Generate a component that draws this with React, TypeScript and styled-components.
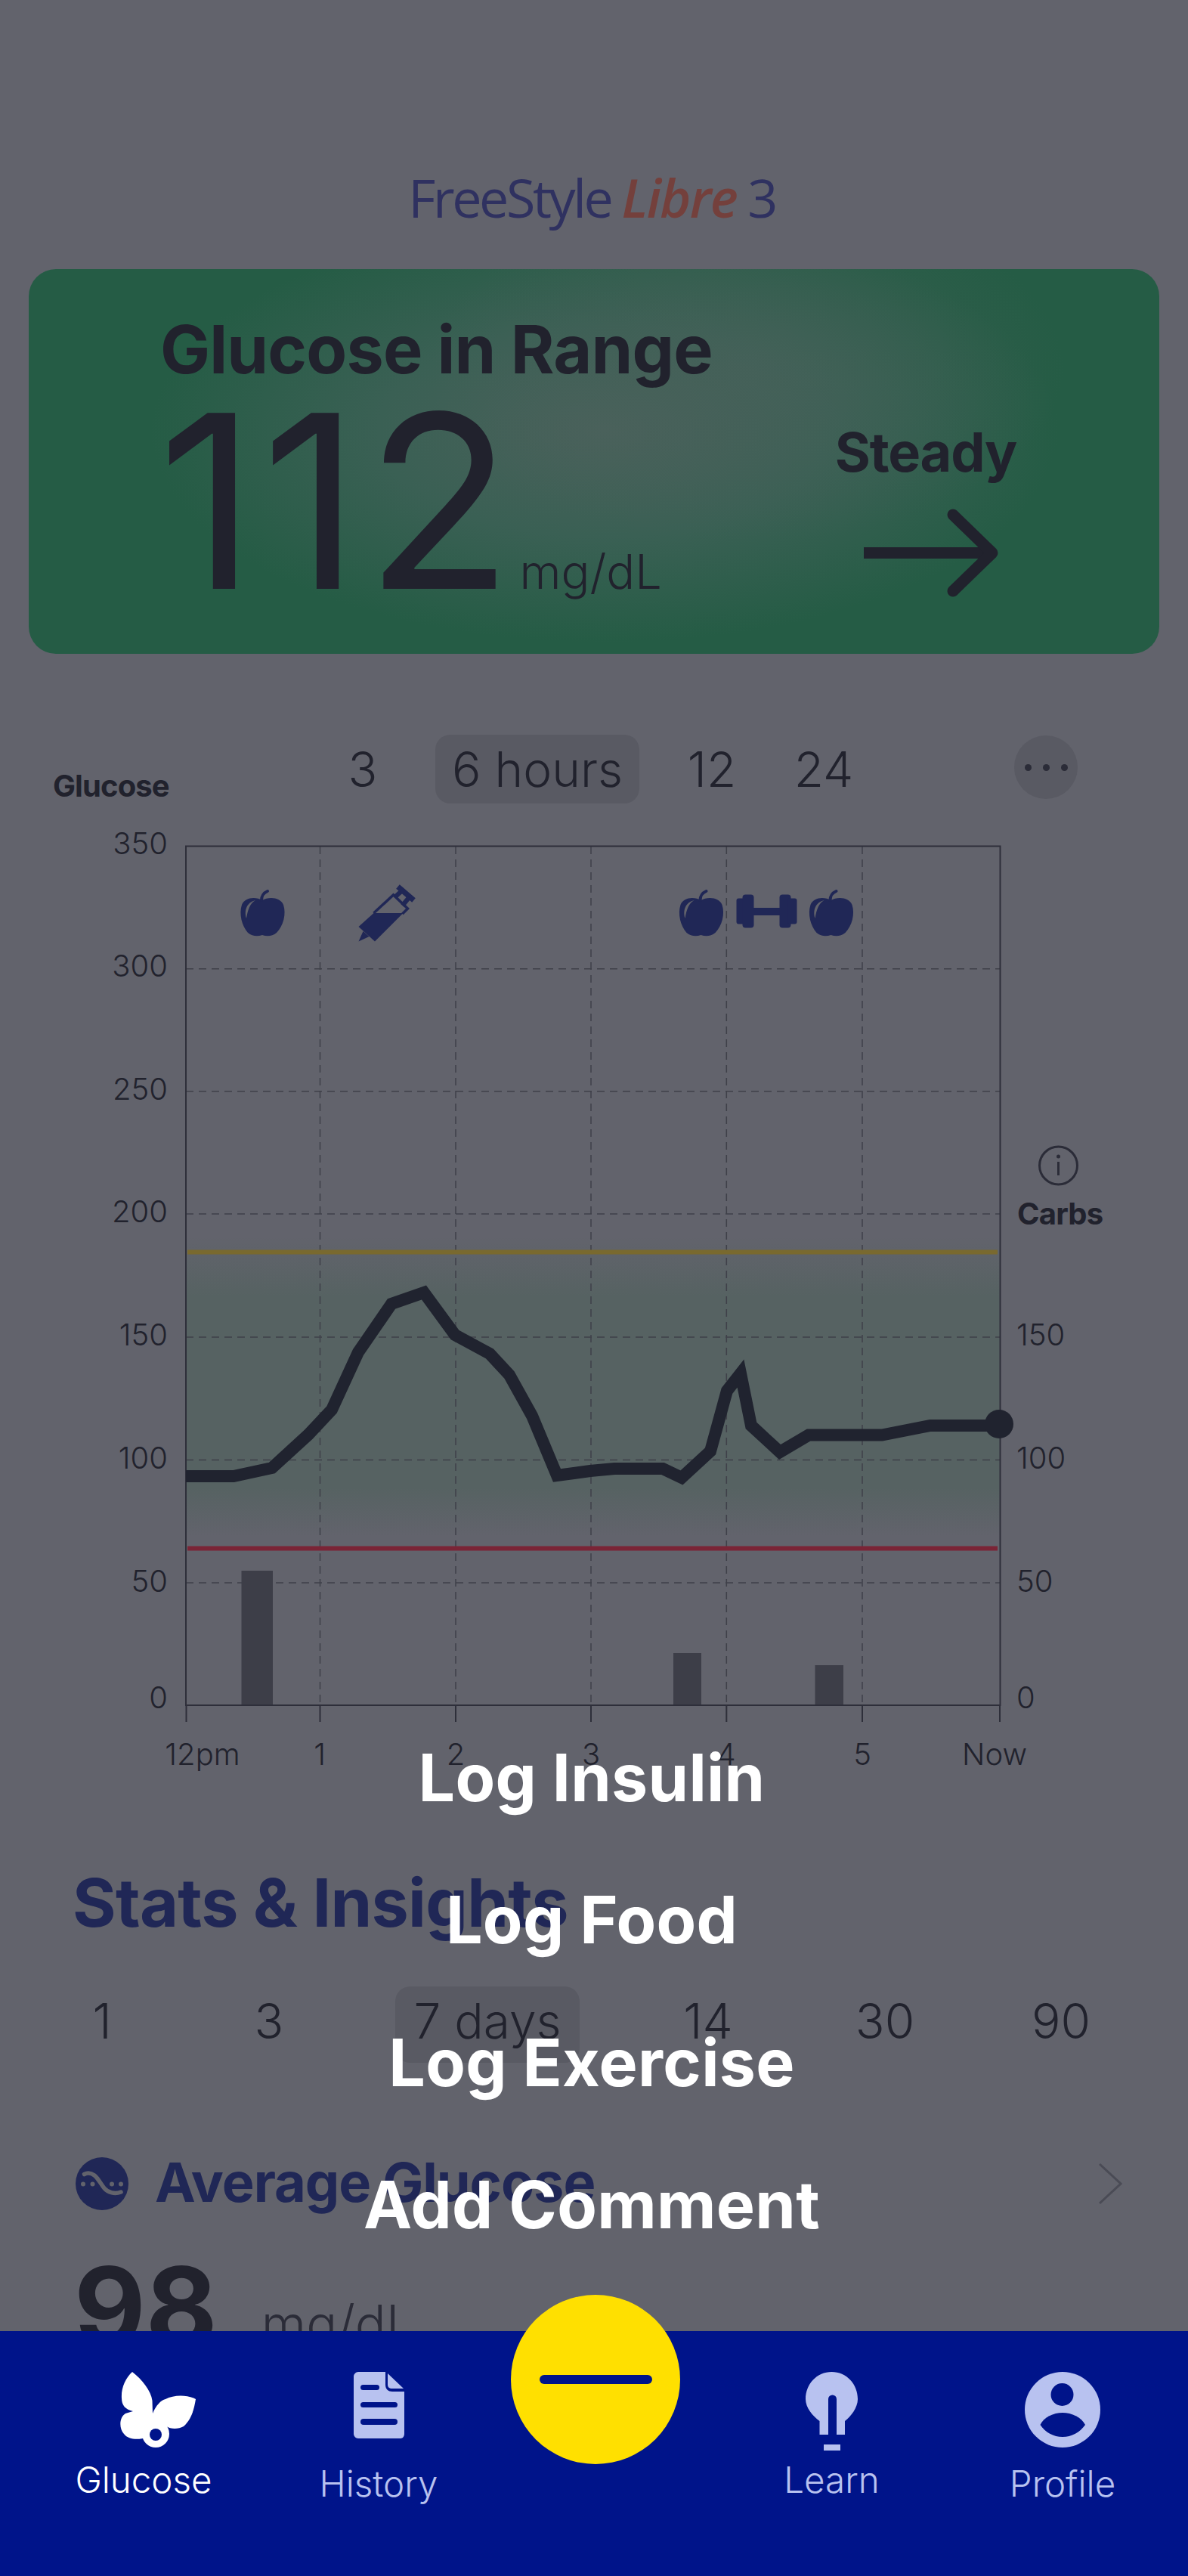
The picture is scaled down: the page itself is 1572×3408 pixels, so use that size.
import React from "react";
import styled, { createGlobalStyle } from "styled-components";

const NAVY = "#202756";
const INK = "#21222d";
const SOFT_INK = "#2b2c38";
const DIM = "#62636c";
const PILL = "#595a63";
const NAV_BLUE = "#00148a";
const NAV_TINT = "#b8c2f0";

const GlobalStyle = createGlobalStyle`
  html, body {
    margin: 0;
    padding: 0;
    background: ${DIM};
  }

  * {
    box-sizing: border-box;
  }
`;

const Page = styled.div`
  position: relative;
  width: 1572px;
  height: 3408px;
  overflow: hidden;
  background: ${DIM};
  font-family: Inter, "Liberation Sans", sans-serif;
  color: ${INK};
`;

const Logo = styled.div`
  display: flex;
  justify-content: center;
  gap: 14px;
  margin: 227px 0 61px;
  padding-right: 6px;
  height: 68px;
  font-family: "Open Sans", sans-serif;
  font-size: 70px;
  line-height: 68px;
`;

const LogoPart = styled.span<{ $brand?: boolean }>`
  color: ${({ $brand }) => ($brand ? "#74403c" : "#2f3160")};
  font-style: ${({ $brand }) => ($brand ? "italic" : "normal")};
  font-weight: ${({ $brand }) => ($brand ? 600 : 400)};
  letter-spacing: ${({ $brand }) => ($brand ? "-1.6px" : "-3.4px")};
`;

const GlucoseCard = styled.section`
  display: flex;
  justify-content: space-between;
  width: 1496px;
  height: 509px;
  margin-left: 38px;
  padding: 62px 159px 0 174px;
  border-radius: 36px;
  background:
    radial-gradient(ellipse 420px 230px at 950px 130px, rgba(74, 97, 91, 0.6), rgba(74, 97, 91, 0) 100%),
    radial-gradient(ellipse 600px 280px at 762px 214px, #4a615b 0%, #3a6054 50%, #255c45 100%);
`;

const ReadingColumn = styled.div`
  display: flex;
  flex-direction: column;
`;

const CardTitle = styled.h1`
  margin: 0;
  font-size: 88px;
  line-height: 88px;
  font-weight: 700;
  letter-spacing: -0.8px;
`;

const ReadingRow = styled.div`
  display: flex;
  align-items: baseline;
  margin: -3px 0 0 -3px;
`;

const ReadingValue = styled.span`
  font-size: 320px;
  line-height: 320px;
  font-weight: 400;
  letter-spacing: 7px;
`;

const ReadingUnit = styled.span`
  margin-left: 2px;
  font-size: 63px;
  line-height: 64px;
  font-weight: 300;
  color: ${INK};
`;

const TrendColumn = styled.div`
  display: flex;
  flex-direction: column;
  align-items: center;
  width: 300px;
  padding-top: 144px;
`;

const TrendLabel = styled.div`
  font-size: 72px;
  line-height: 72px;
  font-weight: 700;
  letter-spacing: -1.2px;
`;

const TrendArrow = styled.svg`
  margin: 39px 0 0 14px;
`;

const RangeRow = styled.div`
  display: flex;
  margin-top: 107px;
  padding: 0 146px 0 70px;
  height: 91px;
`;

const AxisTitle = styled.div`
  align-self: flex-end;
  width: 360px;
  margin-bottom: 3px;
  font-size: 40px;
  line-height: 40px;
  font-weight: 700;
  letter-spacing: -0.9px;
`;

const TabStrip = styled.div<{ $gap: number }>`
  display: flex;
  gap: ${({ $gap }) => $gap}px;
`;

const Tab = styled.div<{ $width: number; $height: number; $active?: boolean; $lift?: number }>`
  width: ${({ $width }) => $width}px;
  height: ${({ $height }) => $height}px;
  padding-bottom: ${({ $lift }) => $lift ?? 0}px;
  border-radius: 20px;
  background: ${({ $active }) => ($active ? PILL : "transparent")};
  color: ${INK};
  text-align: center;
  font-size: 64px;
  line-height: ${({ $height, $lift }) => $height - ($lift ?? 0)}px;
  font-weight: 300;
  white-space: nowrap;
`;

const MoreButton = styled.div`
  display: flex;
  align-items: center;
  justify-content: center;
  gap: 15px;
  width: 84px;
  height: 84px;
  margin: 1px 0 0 auto;
  border-radius: 50%;
  background: ${PILL};
`;

const MoreDot = styled.span`
  width: 9px;
  height: 9px;
  border-radius: 50%;
  background: ${SOFT_INK};
`;

const ChartFrame = styled.svg`
  display: block;
  margin-top: 27px;
  font-family: Inter, "Liberation Sans", sans-serif;
`;

const StatsTitle = styled.h2`
  margin: 113px 0 0 96px;
  font-size: 88px;
  line-height: 88px;
  font-weight: 700;
  letter-spacing: -0.7px;
  color: ${NAVY};
`;

const DayRow = styled.div`
  margin: 67px 0 0 81px;
`;

const StatRow = styled.div`
  display: flex;
  align-items: center;
  height: 70px;
  margin-top: 125px;
  padding: 0 87px 0 100px;
`;

const StatLabel = styled.div`
  margin: 0 0 4px 35px;
  font-size: 72px;
  line-height: 72px;
  font-weight: 700;
  letter-spacing: -1px;
  color: ${NAVY};
`;

const StatChevron = styled.svg`
  margin-left: auto;
`;

const StatValueRow = styled.div`
  display: flex;
  align-items: flex-start;
  margin: 56px 0 0 98px;
`;

const StatValue = styled.span`
  font-size: 146px;
  line-height: 144px;
  font-weight: 700;
`;

const StatUnit = styled.span`
  margin: 60px 0 0 58px;
  font-size: 68px;
  line-height: 68px;
  font-weight: 300;
  color: ${SOFT_INK};
`;

// the actions that open over the dimmed page
const ActionMenu = styled.div`
  position: absolute;
  top: 2309px;
  left: 0;
  width: 1566px;
  display: flex;
  flex-direction: column;
  gap: 102.3px;
  color: #fff;
  text-align: center;
  font-size: 86px;
  line-height: 86px;
  font-weight: 700;
  letter-spacing: 0.3px;
`;

const BottomNav = styled.nav`
  position: absolute;
  left: 0;
  right: 0;
  bottom: 0;
  display: grid;
  grid-template-columns: 312px 310px 288px 313px 298px;
  height: 324px;
  padding: 54px 0 0 34px;
  background: ${NAV_BLUE};
`;

const NavItem = styled.div<{ $active?: boolean }>`
  display: flex;
  flex-direction: column;
  align-items: center;
  color: ${({ $active }) => ($active ? "#fff" : NAV_TINT)};
`;

const NavIconSlot = styled.div<{ $low?: boolean; $shift?: number }>`
  height: ${({ $low }) => ($low ? 105 : 100)}px;
  margin-left: ${({ $shift }) => $shift ?? 0}px;
`;

const NavLabel = styled.div`
  margin-top: 19px;
  font-size: 47.5px;
  line-height: 48px;
  font-weight: 300;
`;

const Fab = styled.div`
  position: absolute;
  left: 676px;
  top: 3036px;
  display: flex;
  align-items: center;
  justify-content: center;
  width: 224px;
  height: 224px;
  border-radius: 50%;
  background: #ffe000;
`;

const FabMinus = styled.span`
  width: 149px;
  height: 12px;
  border-radius: 6px;
  background: ${NAV_BLUE};
`;

const yTicks = [
  { label: "350", y: 1130, grid: 1119.5 },
  { label: "300", y: 1292, grid: 1281.7 },
  { label: "250", y: 1455, grid: 1443.7 },
  { label: "200", y: 1617, grid: 1606 },
  { label: "150", y: 1780, grid: 1769 },
  { label: "100", y: 1943, grid: 1931.6 },
  { label: "50", y: 2106, grid: 2094 },
  { label: "0", y: 2260, grid: 2256 },
];

const xTicks = [
  { label: "12pm", x: 268, tick: 246.5 },
  { label: "1", x: 423, tick: 423.5 },
  { label: "2", x: 603, tick: 603 },
  { label: "3", x: 782, tick: 782 },
  { label: "4", x: 961, tick: 961.3 },
  { label: "5", x: 1141, tick: 1141 },
  { label: "Now", x: 1316, tick: 1323 },
];

const curve =
  "246,1953 309,1953 360,1942 408,1898 439,1865 474,1789 518,1725 561,1710 602,1766 648,1791 674,1819 704,1873 737,1952 781,1946 813,1943 877,1943 902,1955 940,1920 962,1840 980,1817 994,1886 1032,1921 1070,1898.5 1167,1898.5 1231,1886 1322,1886";

const carbBars = [
  { x: 319.5, top: 2078, w: 41.5 },
  { x: 891, top: 2187, w: 37 },
  { x: 1078.5, top: 2203, w: 37.5 },
];

const AppleMark = ({ x, y }: { x: number; y: number }) => (
  <g transform={`translate(${x} ${y})`}>
    <path
      fill={NAVY}
      d="M29 14C38 9 53 10 57 20C61 32 57 48 48 57C42 62 35 62 29 60C23 62 16 62 10 57C2 48 -2 32 2 20C6 10 20 9 29 14Z"
    />
    <path fill="none" stroke={NAVY} strokeWidth="4" strokeLinecap="round" d="M28 14C28 9 31 4 36 2" />
    <path fill={DIM} d="M8 38C5 28 8 17 20 14C13 18 10 26 8 38Z" />
  </g>
);

const SyringeMark = ({ x, y }: { x: number; y: number }) => (
  <g transform={`translate(${x} ${y})`}>
    <path fill={NAVY} d="M0 54L20 36H59L21.5 73.5Z" />
    <path fill="none" stroke={NAVY} strokeWidth="3.5" d="M20 36L46 12L65 30L58 37" />
    <path fill={NAVY} d="M6 60L14 67L0 73.5Z" />
    <path fill="none" stroke={NAVY} strokeWidth="6" d="M49 14L60 4" />
    <path fill="none" stroke={NAVY} strokeWidth="7" d="M52 1L73 19" />
    <path fill="none" stroke={NAVY} strokeWidth="6" d="M58 26L67 15" />
  </g>
);

const DumbbellMark = ({ x, y }: { x: number; y: number }) => (
  <g transform={`translate(${x} ${y})`} fill={NAVY}>
    <rect x="0" y="5" width="12" height="34" rx="3" />
    <rect x="8" y="0" width="15" height="44" rx="4" />
    <rect x="22" y="17.5" width="36" height="10" />
    <rect x="57" y="0" width="15" height="44" rx="4" />
    <rect x="68" y="5" width="12" height="34" rx="3" />
  </g>
);

const GlucoseChart = () => (
  <ChartFrame width="1572" height="1270" viewBox="0 1090 1572 1270">
    <defs>
      <linearGradient id="rangeBand" x1="0" y1="0" x2="0" y2="1">
        <stop offset="0" stopColor="#566262" stopOpacity="0" />
        <stop offset="0.2" stopColor="#566262" />
        <stop offset="0.84" stopColor="#566262" />
        <stop offset="1" stopColor="#566262" stopOpacity="0" />
      </linearGradient>
    </defs>
    <rect x="247" y="1636" width="1076" height="396" fill="url(#rangeBand)" />

    {yTicks.slice(1, 7).map((tick) => (
      <line
        key={tick.label}
        x1="246"
        x2="1323"
        y1={tick.grid}
        y2={tick.grid}
        stroke="#3f4049"
        strokeWidth="1.5"
        strokeDasharray="10 7"
      />
    ))}
    {xTicks.slice(1, 6).map((tick) => (
      <line
        key={tick.label}
        x1={tick.tick}
        x2={tick.tick}
        y1="1120"
        y2="2256"
        stroke="#3f4049"
        strokeWidth="1.5"
        strokeDasharray="10 7"
      />
    ))}

    <rect x="248" y="1653.5" width="1072" height="6" fill="#79692f" />
    <rect x="248" y="2045.5" width="1072" height="6" fill="#7a2436" />

    {carbBars.map((bar) => (
      <rect key={bar.x} x={bar.x} y={bar.top} width={bar.w} height={2256 - bar.top} fill="#3d3e48" />
    ))}

    <path d="M246 1119.5H1323.5V2256H246Z" fill="none" stroke="#2e2f3a" strokeWidth="2" />
    {xTicks.map((tick) => (
      <line key={tick.label} x1={tick.tick} x2={tick.tick} y1="2256" y2="2278" stroke="#2e2f3a" strokeWidth="2" />
    ))}

    <polyline points={curve} fill="none" stroke="#20232f" strokeWidth="16" strokeLinejoin="miter" />
    <circle cx="1322" cy="1884" r="19" fill="#20232f" />

    <AppleMark x={318} y={1177} />
    <SyringeMark x={474.5} y={1172} />
    <AppleMark x={898.5} y={1177} />
    <DumbbellMark x={974.5} y={1183.5} />
    <AppleMark x={1070.5} y={1177} />

    <g fontSize="40" fontWeight="300" fill={INK}>
      {yTicks.map((tick) => (
        <text key={tick.label} x="222" y={tick.y} textAnchor="end">
          {tick.label}
        </text>
      ))}
      {yTicks.slice(4).map((tick) => (
        <text key={tick.label} x="1345" y={tick.y}>
          {tick.label}
        </text>
      ))}
      {xTicks.map((tick) => (
        <text key={tick.label} x={tick.x} y="2335" textAnchor="middle">
          {tick.label}
        </text>
      ))}
    </g>

    <circle cx="1400.5" cy="1542" r="25" fill="none" stroke={SOFT_INK} strokeWidth="3" />
    <circle cx="1400.5" cy="1530" r="2.5" fill={SOFT_INK} />
    <rect x="1399" y="1537" width="3" height="18" fill={SOFT_INK} />
    <text x="1346" y="1620" fontSize="40" fontWeight="700" letterSpacing="-0.8" fill={INK}>
      Carbs
    </text>
  </ChartFrame>
);

const ButterflyIcon = () => (
  <svg width="101" height="100" viewBox="0 0 101 100">
    <path
      fill="#fff"
      d="M17 0C30 10 42 25 43.5 38L44 55C48 45 55 37 61 36C72 30 90 30 101 36C99 48 96 62 85 72C78 76 68 76 62 72L48 83L36 87C25 90 12 90 6 82C-1 74 0 60 8 55L18 52C8 50 3 44 3 35C2 22 8 8 17 0Z"
    />
    <circle cx="48" cy="82" r="18" fill="#fff" />
    <circle cx="48" cy="83" r="8" fill={NAV_BLUE} />
  </svg>
);

const HistoryIcon = () => (
  <svg width="67" height="88" viewBox="0 0 67 88">
    <path
      fill={NAV_TINT}
      d="M6 0H42V17C42 23 46 26 51 26H67V82C67 85 65 88 62 88H6C3 88 0 85 0 82V6C0 3 3 0 6 0Z"
    />
    <path fill={NAV_TINT} d="M45 2L66 22H51C47 22 45 20 45 17Z" />
    <rect x="9" y="17" width="25" height="7" rx="3.5" fill={NAV_BLUE} />
    <rect x="9" y="40" width="49" height="7" rx="3.5" fill={NAV_BLUE} />
    <rect x="9" y="62" width="49" height="8" rx="4" fill={NAV_BLUE} />
  </svg>
);

const BulbIcon = () => (
  <svg width="69" height="104" viewBox="0 0 69 104">
    <path
      fill={NAV_TINT}
      d="M34.5 0C54 0 69 16 69 36C69 47 60 59 52 65V83H41V36A5.5 5.5 0 0 0 30 36V83H18.5V65C9 58 0 47 0 36C0 16 15 0 34.5 0Z"
    />
    <rect x="24" y="96" width="22" height="8" fill={NAV_TINT} />
  </svg>
);

const ProfileIcon = () => (
  <svg width="100" height="100" viewBox="0 0 100 100">
    <circle cx="50" cy="50" r="50" fill={NAV_TINT} />
    <circle cx="49.5" cy="30" r="15" fill={NAV_BLUE} />
    <path
      fill={NAV_BLUE}
      d="M20.5 70C25 60 38 54 50 54C62 54 75 60 80 70C73 80 62 86 50 86C38 86 27 80 20.5 70Z"
    />
  </svg>
);

const AverageIcon = () => (
  <svg width="70" height="70" viewBox="0 0 70 70">
    <circle cx="35" cy="35" r="35" fill={NAVY} />
    <path
      d="M11.5 22.5C16 20 21 21 25 24C30 28 33 35 38 41C43 47 52 49 60 46"
      fill="none"
      stroke={DIM}
      strokeWidth="5.5"
      strokeLinecap="round"
    />
    <circle cx="10" cy="35.5" r="3" fill={DIM} />
    <circle cx="22.5" cy="35.5" r="3" fill={DIM} />
    <circle cx="48" cy="35.5" r="3" fill={DIM} />
    <circle cx="60" cy="35.5" r="3" fill={DIM} />
  </svg>
);

const hourTabs = [
  { label: "3", width: 100 },
  { label: "6 hours", width: 270, active: true },
  { label: "12", width: 100 },
  { label: "24", width: 104 },
];

const dayTabs = [
  { label: "1", width: 108 },
  { label: "3", width: 114 },
  { label: "7 days", width: 244, active: true },
  { label: "14", width: 120 },
  { label: "30", width: 128 },
  { label: "90", width: 118 },
];

const actions = ["Log Insulin", "Log Food", "Log Exercise", "Add Comment"];

const App = () => (
  <Page>
    <GlobalStyle />

    <Logo>
      <LogoPart>FreeStyle</LogoPart>
      <LogoPart $brand>Libre</LogoPart>
      <LogoPart>3</LogoPart>
    </Logo>

    <GlucoseCard>
      <ReadingColumn>
        <CardTitle>Glucose in Range</CardTitle>
        <ReadingRow>
          <ReadingValue>112</ReadingValue>
          <ReadingUnit>mg/dL</ReadingUnit>
        </ReadingRow>
      </ReadingColumn>
      <TrendColumn>
        <TrendLabel>Steady</TrendLabel>
        <TrendArrow width="178" height="117" viewBox="0 0 178 117">
          <path d="M0 58.5H170" fill="none" stroke={INK} strokeWidth="15" />
          <path
            d="M118 8L170 58.5L118 109"
            fill="none"
            stroke={INK}
            strokeWidth="15"
            strokeLinecap="round"
            strokeLinejoin="round"
          />
        </TrendArrow>
      </TrendColumn>
    </GlucoseCard>

    <RangeRow>
      <AxisTitle>Glucose</AxisTitle>
      <TabStrip $gap={46}>
        {hourTabs.map((tab) => (
          <Tab key={tab.label} $width={tab.width} $height={91} $active={tab.active}>
            {tab.label}
          </Tab>
        ))}
      </TabStrip>
      <MoreButton>
        <MoreDot />
        <MoreDot />
        <MoreDot />
      </MoreButton>
    </RangeRow>

    <GlucoseChart />

    <StatsTitle>Stats &amp; Insights</StatsTitle>

    <DayRow>
      <TabStrip $gap={110}>
        {dayTabs.map((tab) => (
          <Tab key={tab.label} $width={tab.width} $height={101} $lift={10} $active={tab.active}>
            {tab.label}
          </Tab>
        ))}
      </TabStrip>
    </DayRow>

    <StatRow>
      <AverageIcon />
      <StatLabel>Average Glucose</StatLabel>
      <StatChevron width="32" height="56" viewBox="0 0 32 56">
        <path d="M2 2L30 28L2 54" fill="none" stroke="#4a4b55" strokeWidth="3" />
      </StatChevron>
    </StatRow>

    <StatValueRow>
      <StatValue>98</StatValue>
      <StatUnit>mg/dL</StatUnit>
    </StatValueRow>

    <ActionMenu>
      {actions.map((action) => (
        <div key={action}>{action}</div>
      ))}
    </ActionMenu>

    <BottomNav>
      <NavItem $active>
        <NavIconSlot $shift={36}>
          <ButterflyIcon />
        </NavIconSlot>
        <NavLabel>Glucose</NavLabel>
      </NavItem>
      <NavItem>
        <NavIconSlot $low>
          <HistoryIcon />
        </NavIconSlot>
        <NavLabel>History</NavLabel>
      </NavItem>
      <div />
      <NavItem>
        <NavIconSlot>
          <BulbIcon />
        </NavIconSlot>
        <NavLabel>Learn</NavLabel>
      </NavItem>
      <NavItem>
        <NavIconSlot $low>
          <ProfileIcon />
        </NavIconSlot>
        <NavLabel>Profile</NavLabel>
      </NavItem>
    </BottomNav>

    <Fab>
      <FabMinus />
    </Fab>
  </Page>
);

export default App;
